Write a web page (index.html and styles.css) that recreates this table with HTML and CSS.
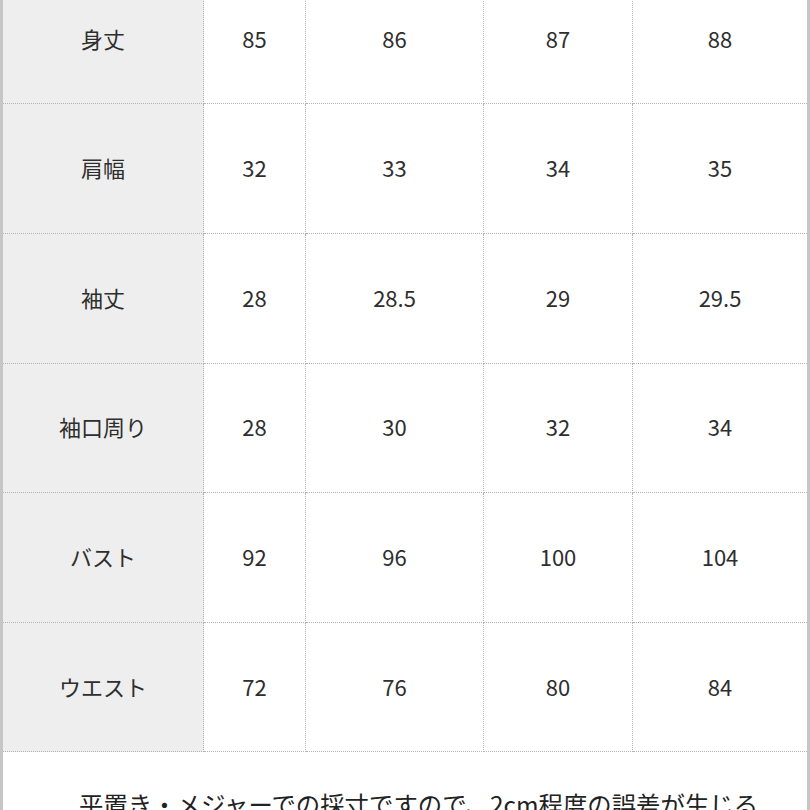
FILE: index.html
```html
<!DOCTYPE html>
<html lang="ja">
<head>
<meta charset="utf-8">
<link rel="stylesheet" href="styles.css">
</head>
<body>
<div class="frame">
  <div class="size-table">
    <div class="cell label">身丈</div><div class="cell">85</div><div class="cell">86</div><div class="cell">87</div><div class="cell last">88</div>
    <div class="cell label">肩幅</div><div class="cell">32</div><div class="cell">33</div><div class="cell">34</div><div class="cell last">35</div>
    <div class="cell label">袖丈</div><div class="cell">28</div><div class="cell">28.5</div><div class="cell">29</div><div class="cell last">29.5</div>
    <div class="cell label">袖口周り</div><div class="cell">28</div><div class="cell">30</div><div class="cell">32</div><div class="cell last">34</div>
    <div class="cell label">バスト</div><div class="cell">92</div><div class="cell">96</div><div class="cell">100</div><div class="cell last">104</div>
    <div class="cell label">ウエスト</div><div class="cell">72</div><div class="cell">76</div><div class="cell">80</div><div class="cell last">84</div>
  </div>
  <p class="note">平置き・メジャーでの採寸ですので、2cm程度の誤差が生じる</p>
</div>
</body>
</html>
```
FILE: styles.css
```css
html, body {
  margin: 0;
  padding: 0;
  background: #ffffff;
}
body {
  font-family: "Noto Sans CJK JP", "Noto Sans", sans-serif;
  color: #2e2e2e;
}
.frame {
  box-sizing: border-box;
  width: 810px;
  height: 810px;
  overflow: hidden;
  border-left: 3px solid #c6c6c6;
  border-right: 3px solid #c6c6c6;
}
.size-table {
  display: grid;
  grid-template-columns: 201px 102px 178px 149px 174px;
  grid-auto-rows: 129.6px;
  margin-top: -25.2px;
}
.cell {
  box-sizing: border-box;
  display: flex;
  align-items: center;
  justify-content: center;
  padding-bottom: 3px;
  font-size: 22px;
  border-bottom: 1px dotted #b4b4b4;
  border-right: 1px dotted #b4b4b4;
  background: #ffffff;
}
.cell.label {
  background: #eeeeee;
}
.cell.last {
  border-right: none;
}
.note {
  margin: 34px 0 0 0;
  padding-left: 76px;
  font-size: 24.4px;
  line-height: 36px;
  white-space: nowrap;
  color: #222222;
}
```
